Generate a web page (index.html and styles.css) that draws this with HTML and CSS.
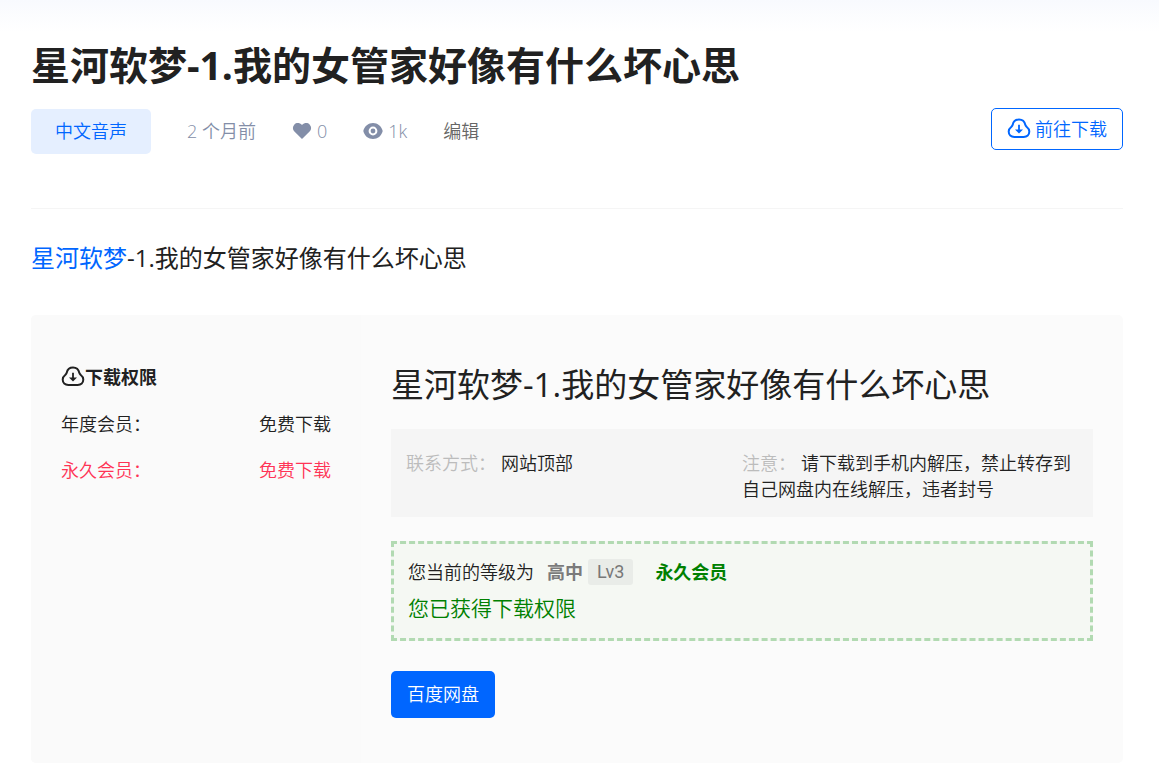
FILE: index.html
```html
<!DOCTYPE html>
<html lang="zh-CN">
<head>
<meta charset="utf-8">
<meta name="viewport" content="width=device-width, initial-scale=1">
<title>星河软梦-1.我的女管家好像有什么坏心思</title>
<link rel="stylesheet" href="styles.css">
</head>
<body>
<svg class="sprite" aria-hidden="true">
  <symbol id="cloud-down" viewBox="0 0 24 24">
    <path d="M12 2.500C8.600 2.500 6.400 4.500 5.700 7.700 5.500 8.700 5 9.200 4.200 10 2.600 11.200 1.700 12.600 1.700 14.500 1.700 17.800 4 19.900 7.300 19.900H16.700C20 19.900 22.300 17.800 22.300 14.500 22.300 12.600 21.400 11.200 19.800 10 19 9.200 18.500 8.700 18.300 7.700 17.600 4.500 15.400 2.500 12 2.500Z" fill="none" stroke="currentColor" stroke-width="2"/>
    <path d="M11.100 7.800h1.800v4.600H16L12 16.400 8 12.400h3.100z" fill="currentColor"/>
  </symbol>
</svg>
<main class="page">
  <header class="post-header">
    <h1 class="post-title">星河软梦-1.我的女管家好像有什么坏心思</h1>
    <div class="post-meta">
      <a class="category" href="#">中文音声</a>
      <time class="meta-item date">2 个月前</time>
      <span class="meta-item likes">
        <svg class="meta-icon" viewBox="0 0 20 20" aria-hidden="true"><path d="M10 18 2.400 10.500C.4 8.500.4 5.300 2.400 3.400 4.400 1.500 7.500 1.500 10 3.900 12.500 1.500 15.600 1.500 17.600 3.400 19.600 5.300 19.600 8.500 17.600 10.500Z" fill="currentColor"/></svg>
        <span>0</span>
      </span>
      <span class="meta-item views">
        <svg class="meta-icon" viewBox="0 0 20 20" aria-hidden="true"><path fill="currentColor" fill-rule="evenodd" d="M10 2C5.400 2 1.500 5 .3 10 1.500 15 5.400 18 10 18S18.500 15 19.700 10C18.500 5 14.600 2 10 2Zm0 3.600a4.400 4.400 0 1 1 0 8.800 4.400 4.400 0 0 1 0-8.800Zm0 2a2.400 2.400 0 1 0 0 4.800 2.400 2.400 0 0 0 0-4.800Z"/></svg>
        <span>1k</span>
      </span>
      <a class="meta-item edit" href="#">编辑</a>
      <button class="goto-download" type="button"><svg class="cloud-icon" aria-hidden="true"><use href="#cloud-down"/></svg><span>前往下载</span></button>
    </div>
  </header>
  <p class="intro"><a class="intro-link" href="#">星河软梦</a>-1.我的女管家好像有什么坏心思</p>
  <section class="download-card">
    <aside class="rights">
      <h2 class="rights-title"><svg class="cloud-icon" aria-hidden="true"><use href="#cloud-down"/></svg><span>下载权限</span></h2>
      <ul class="rights-list">
        <li class="rights-row"><span>年度会员：</span><span>免费下载</span></li>
        <li class="rights-row current"><span>永久会员：</span><span>免费下载</span></li>
      </ul>
    </aside>
    <div class="resource">
      <h2 class="resource-title">星河软梦-1.我的女管家好像有什么坏心思</h2>
      <div class="attributes">
        <p class="attribute"><span class="attribute-name">联系方式：</span>网站顶部</p>
        <p class="attribute"><span class="attribute-name">注意：</span>请下载到手机内解压，禁止转存到自己网盘内在线解压，违者封号</p>
      </div>
      <div class="status">
        <p class="status-level"><span>您当前的等级为</span><b class="rank">高中</b><span class="level">Lv3</span><b class="member">永久会员</b></p>
        <p class="status-granted">您已获得下载权限</p>
      </div>
      <a class="pan-button" href="#">百度网盘</a>
    </div>
  </section>
</main>
</body>
</html>
```
FILE: styles.css
```css
* { box-sizing: border-box; }

body {
  margin: 0;
  background: #fff linear-gradient(#f8fafe, #fff) no-repeat top / 100% 32px;
  color: #212121;
  font: 350 18px/26px "Open Sans", "Noto Sans CJK SC", sans-serif;
}

h1, h2, p, ul { margin: 0; padding: 0; }
a { color: inherit; text-decoration: none; }
b { font-weight: 700; }
button { font: inherit; cursor: pointer; }
.sprite { position: absolute; width: 0; height: 0; }

.page { padding: 38px 36px 6px 31px; }

.post-header { border-bottom: 1px solid #f5f5f5; padding-bottom: 54px; }
.post-title { font-size: 39px; line-height: 54px; font-weight: 700; }
.post-meta { display: flex; align-items: center; margin-top: 16px; color: #838ea8; }

.category {
  padding: 9px 24px 10px;
  border-radius: 5px;
  background: #e5efff;
  color: #0066ff;
}
.meta-item { display: flex; align-items: center; gap: 5px; margin-left: 36px; }
.meta-icon { width: 20px; height: 20px; }
.edit { color: #666; }
.goto-download {
  display: flex;
  align-items: center;
  gap: 4px;
  margin: 0 0 4px auto;
  padding: 7px 15px;
  border: 1px solid #0066ff;
  border-radius: 5px;
  background: #fff;
  color: #0066ff;
}
.cloud-icon { width: 24px; height: 24px; flex: none; }

.intro { margin-top: 31px; font-size: 24px; line-height: 36px; font-weight: 400; }
.intro-link { color: #0066ff; }

.download-card {
  display: flex;
  margin-top: 39px;
  border-radius: 5px;
  background: #fbfbfb;
  overflow: hidden;
}
.rights { flex: 0 0 330px; padding: 49px 30px; background: #fafafa; }
.rights-title { display: flex; align-items: center; font-size: 18px; line-height: 26px; font-weight: 700; }
.rights-list { display: grid; gap: 20px; margin-top: 21px; list-style: none; }
.rights-row { display: flex; justify-content: space-between; }
.current { color: #ff3355; }

.resource { flex: 1; min-width: 0; padding: 46px 30px 45px; }
.resource-title { font-size: 33px; line-height: 48px; font-weight: 400; }
.attributes { display: flex; margin-top: 20px; padding: 21px 15px 15px; background: #f5f5f5; }
.attribute { flex: 1; }
.attribute-name { margin-right: 5px; color: #bcbcbc; }
.status {
  margin-top: 24px;
  padding: 15px 14px 14px;
  border: 3px dashed #b2dab2;
  background: #f5f8f3;
}
.status-level { display: flex; align-items: center; }
.rank { margin-left: 13px; color: #7b7b7b; }
.level { margin: 0 22px 0 5px; padding: 0 9px; border-radius: 3px; background: #e9ece8; color: #777; font-family: Roboto, sans-serif; font-weight: 400; }
.member { color: green; }
.status-granted { margin-top: 7px; color: green; font-size: 21px; line-height: 32px; }
.pan-button {
  display: inline-block;
  margin-top: 30px;
  padding: 10px 16px 11px;
  border-radius: 5px;
  background: #0066ff;
  color: #fff;
}
```
